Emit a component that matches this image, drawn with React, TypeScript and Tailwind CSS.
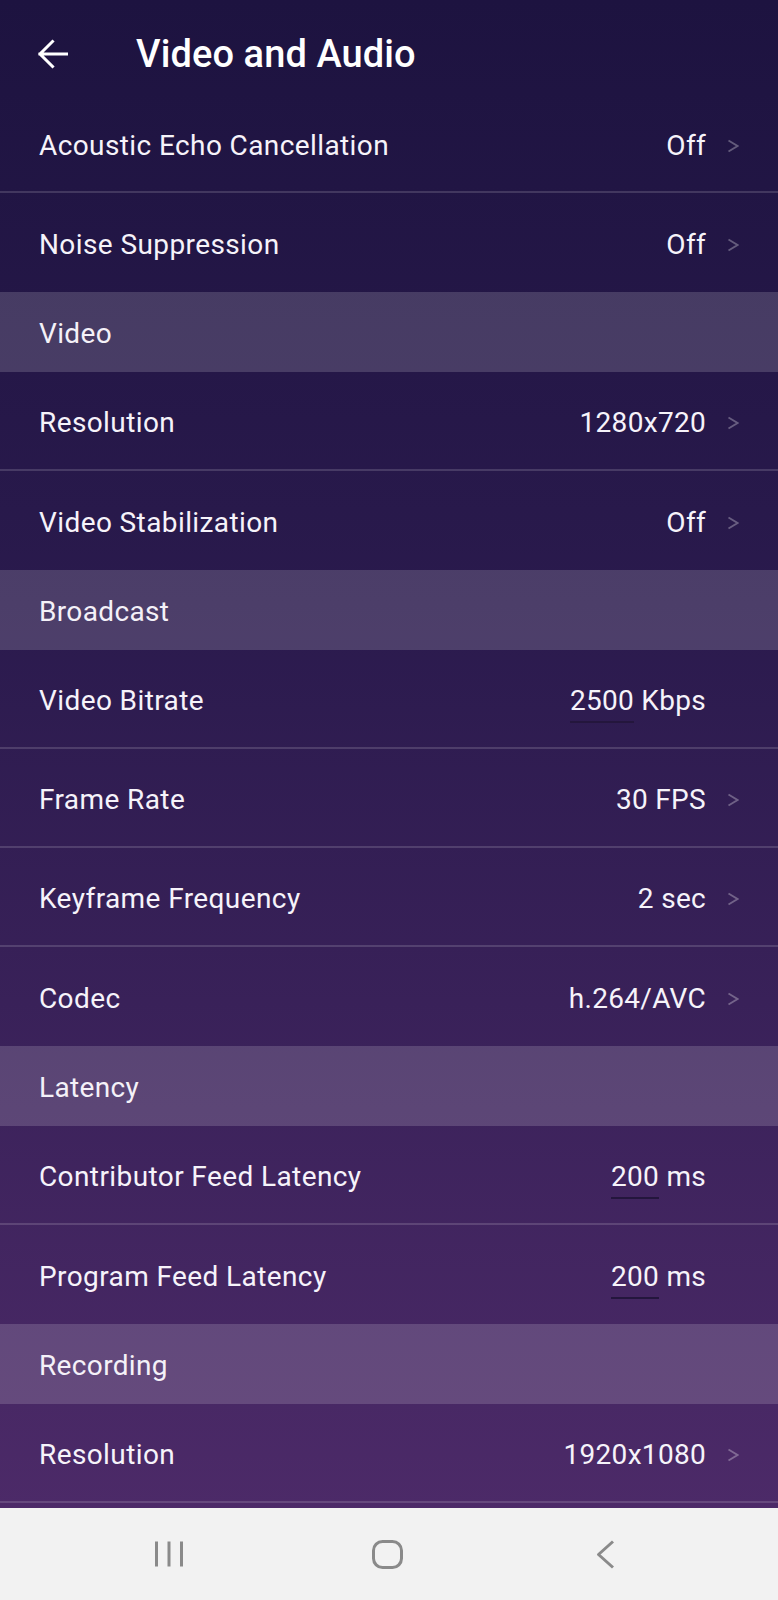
import React from "react";

type Row =
  | { kind: "section"; label: string }
  | { kind: "item"; label: string; value: string; unit?: string; edit?: boolean };

const rows: Row[] = [
  { kind: "item", label: "Acoustic Echo Cancellation", value: "Off" },
  { kind: "item", label: "Noise Suppression", value: "Off" },
  { kind: "section", label: "Video" },
  { kind: "item", label: "Resolution", value: "1280x720" },
  { kind: "item", label: "Video Stabilization", value: "Off" },
  { kind: "section", label: "Broadcast" },
  { kind: "item", label: "Video Bitrate", value: "2500", unit: "Kbps", edit: true },
  { kind: "item", label: "Frame Rate", value: "30 FPS" },
  { kind: "item", label: "Keyframe Frequency", value: "2 sec" },
  { kind: "item", label: "Codec", value: "h.264/AVC" },
  { kind: "section", label: "Latency" },
  { kind: "item", label: "Contributor Feed Latency", value: "200", unit: "ms", edit: true },
  { kind: "item", label: "Program Feed Latency", value: "200", unit: "ms", edit: true },
  { kind: "section", label: "Recording" },
  { kind: "item", label: "Resolution", value: "1920x1080" },
  { kind: "item", label: "Audio", value: "" },
];

const Chevron = () => (
  <svg width="12" height="14" viewBox="0 0 12 14" className="text-white/30">
    <path d="M1.5 1.5 L10.5 7 L1.5 12.5" fill="none" stroke="currentColor" strokeWidth="1.8" />
  </svg>
);

const SettingRow = ({ row, divider, first }: { row: Row; divider: boolean; first: boolean }) => {
  if (row.kind === "section") {
    return (
      <div className="h-[80px] flex items-center pl-[39px] pt-[4px] bg-white/[0.16] text-[28px] tracking-[0.35px] text-[#f4f1f8]">
        {row.label}
      </div>
    );
  }

  return (
    <div
      className={`${first ? "h-[97px]" : "h-[99px]"} shrink-0 flex items-center justify-between pl-[39px] pr-[39px] pt-[4px] ${
        divider ? "border-b-2 border-white/15" : ""
      }`}
    >
      <span className="text-[28px] tracking-[0.4px] text-[#f6f3fa]">{row.label}</span>
      <div className="flex items-center">
        <span className="text-[28px] tracking-[0.3px] text-[#f6f3fa]">
          {row.edit ? (
            <>
              <span className="relative">
                {row.value}
                <span className="absolute left-0 right-0 top-full mt-[4px] h-[2px] bg-[#24163d]" />
              </span>{" "}
              {row.unit}
            </>
          ) : (
            row.value
          )}
        </span>
        <div className="w-[12px] ml-[21px] flex items-center">{!row.edit && <Chevron />}</div>
      </div>
    </div>
  );
};

export default function App() {
  return (
    <div
      className="w-[778px] h-[1600px] flex flex-col overflow-hidden"
      style={{ fontFamily: "Roboto, 'Noto Sans', sans-serif" }}
    >
      <div className="flex-1 min-h-0 flex flex-col bg-[linear-gradient(to_bottom,#1d1340_0%,#2a1a4d_40%,#4c2a68_100%)] text-white">
        <header className="h-[96px] shrink-0 flex items-center pt-[12px] pl-[37px]">
          <svg width="31" height="30" viewBox="0 0 31 30" className="text-white">
            <path
              d="M29.5 15 H3 M15.5 2.5 L3 15 L15.5 27.5"
              fill="none"
              stroke="currentColor"
              strokeWidth="3"
              strokeLinecap="square"
            />
          </svg>
          <h1 className="ml-[68px] text-[38px] font-medium leading-none tracking-[0.1px]">Video and Audio</h1>
        </header>
        <div className="flex flex-col">
          {rows.map((row, i) => {
            const next = rows[i + 1];
            const divider = row.kind === "item" && !!next && next.kind === "item";
            return <SettingRow key={i} row={row} divider={divider} first={i === 0} />;
          })}
        </div>
      </div>
      <nav className="h-[92px] shrink-0 bg-[#f2f2f2] flex items-center justify-center pr-[4px]">
        <div className="w-[218px] flex justify-center">
          <svg width="30" height="28" viewBox="0 0 30 28" className="text-[#8a8a8a]">
            <path d="M2.5 1.5 V26.5 M15 1.5 V26.5 M27.5 1.5 V26.5" stroke="currentColor" strokeWidth="3" fill="none" />
          </svg>
        </div>
        <div className="w-[218px] flex justify-center">
          <svg width="31" height="29" viewBox="0 0 31 29" className="text-[#8a8a8a]">
            <rect x="1.5" y="1.5" width="28" height="26" rx="9" stroke="currentColor" strokeWidth="3" fill="none" />
          </svg>
        </div>
        <div className="w-[218px] flex justify-center">
          <svg width="19" height="29" viewBox="0 0 19 29" className="text-[#8a8a8a]">
            <path d="M17 1.5 L2.5 14.5 L17 27.5" stroke="currentColor" strokeWidth="3" fill="none" strokeLinejoin="round" />
          </svg>
        </div>
      </nav>
    </div>
  );
}
